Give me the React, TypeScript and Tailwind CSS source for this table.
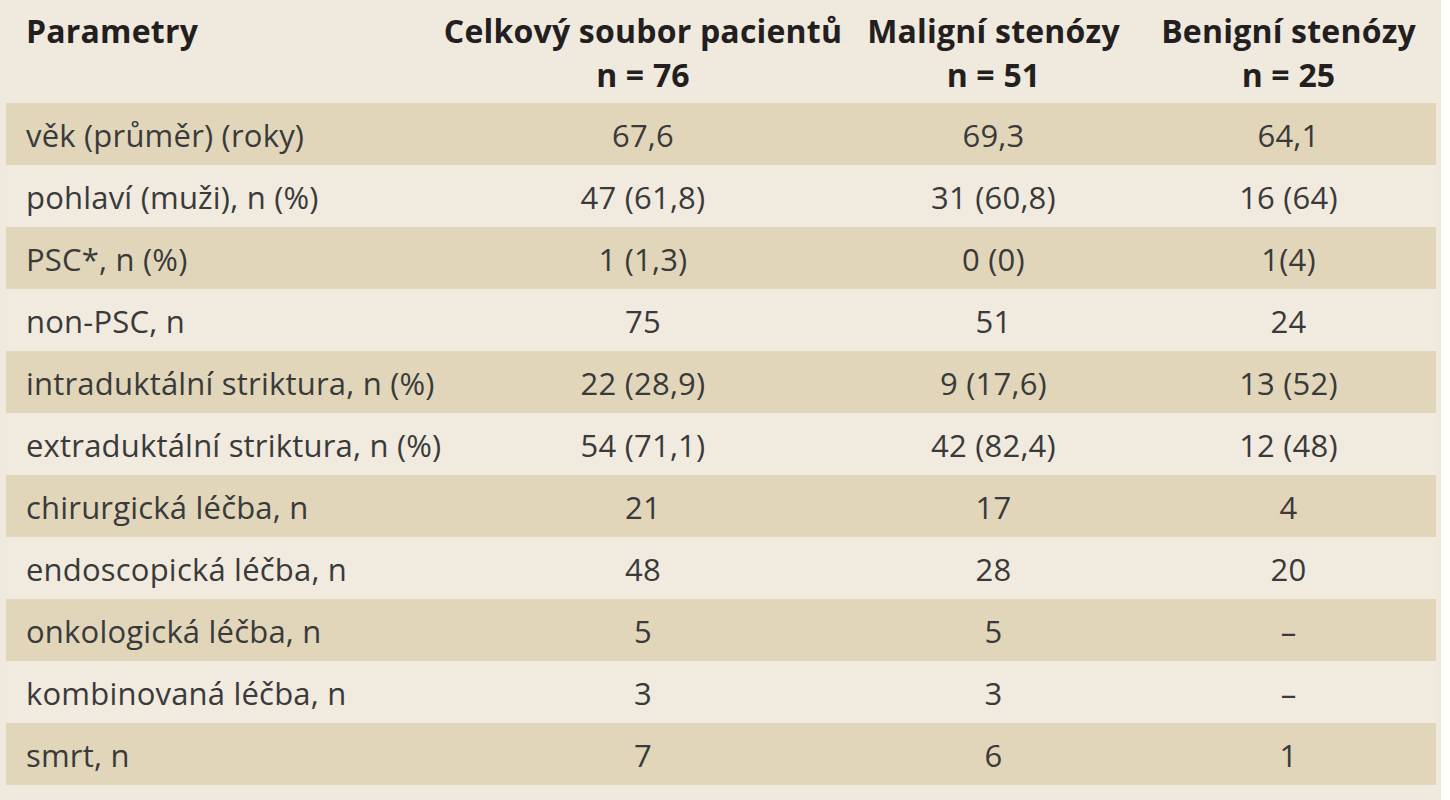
import React from "react";

const rows: [string, string, string, string][] = [
  ["věk (průměr) (roky)", "67,6", "69,3", "64,1"],
  ["pohlaví (muži), n (%)", "47 (61,8)", "31 (60,8)", "16 (64)"],
  ["PSC*, n (%)", "1 (1,3)", "0 (0)", "1(4)"],
  ["non-PSC, n", "75", "51", "24"],
  ["intraduktální striktura, n (%)", "22 (28,9)", "9 (17,6)", "13 (52)"],
  ["extraduktální striktura, n (%)", "54 (71,1)", "42 (82,4)", "12 (48)"],
  ["chirurgická léčba, n", "21", "17", "4"],
  ["endoscopická léčba, n", "48", "28", "20"],
  ["onkologická léčba, n", "5", "5", "–"],
  ["kombinovaná léčba, n", "3", "3", "–"],
  ["smrt, n", "7", "6", "1"],
];

export default function App() {
  return (
    <div className="w-[1450px] h-[800px] bg-white overflow-hidden" style={{ fontFamily: "'Open Sans', 'Noto Sans', sans-serif" }}>
      <div className="w-[1441px] h-[800px] bg-[#f0e9de] pl-[6px]">
        <div className="w-[1430px]">
          <div className="grid grid-cols-[434px_406px_295px_295px] h-[103px] pt-[9px] font-bold text-[32px] leading-[44px] text-[#231f20] tracking-[0.2px]">
            <div className="pl-[20px]">Parametry</div>
            <div className="text-center whitespace-nowrap">
              Celkový soubor pacientů
              <br />n = 76
            </div>
            <div className="text-center whitespace-nowrap">
              Maligní stenózy
              <br />n = 51
            </div>
            <div className="text-center whitespace-nowrap">
              Benigní stenózy
              <br />n = 25
            </div>
          </div>
          {rows.map((r, i) => (
            <div
              key={i}
              className={
                "grid grid-cols-[434px_406px_295px_295px] h-[62px] pt-[14px] text-[31px] leading-[36px] text-[#3a3a3a] tracking-[0.2px] " +
                (i % 2 === 0 ? "bg-[#e1d6ba]" : "bg-[#f1eadf]")
              }
            >
              <div className="pl-[20px] whitespace-nowrap">{r[0]}</div>
              <div className="text-center">{r[1]}</div>
              <div className="text-center">{r[2]}</div>
              <div className="text-center">{r[3]}</div>
            </div>
          ))}
        </div>
      </div>
    </div>
  );
}
